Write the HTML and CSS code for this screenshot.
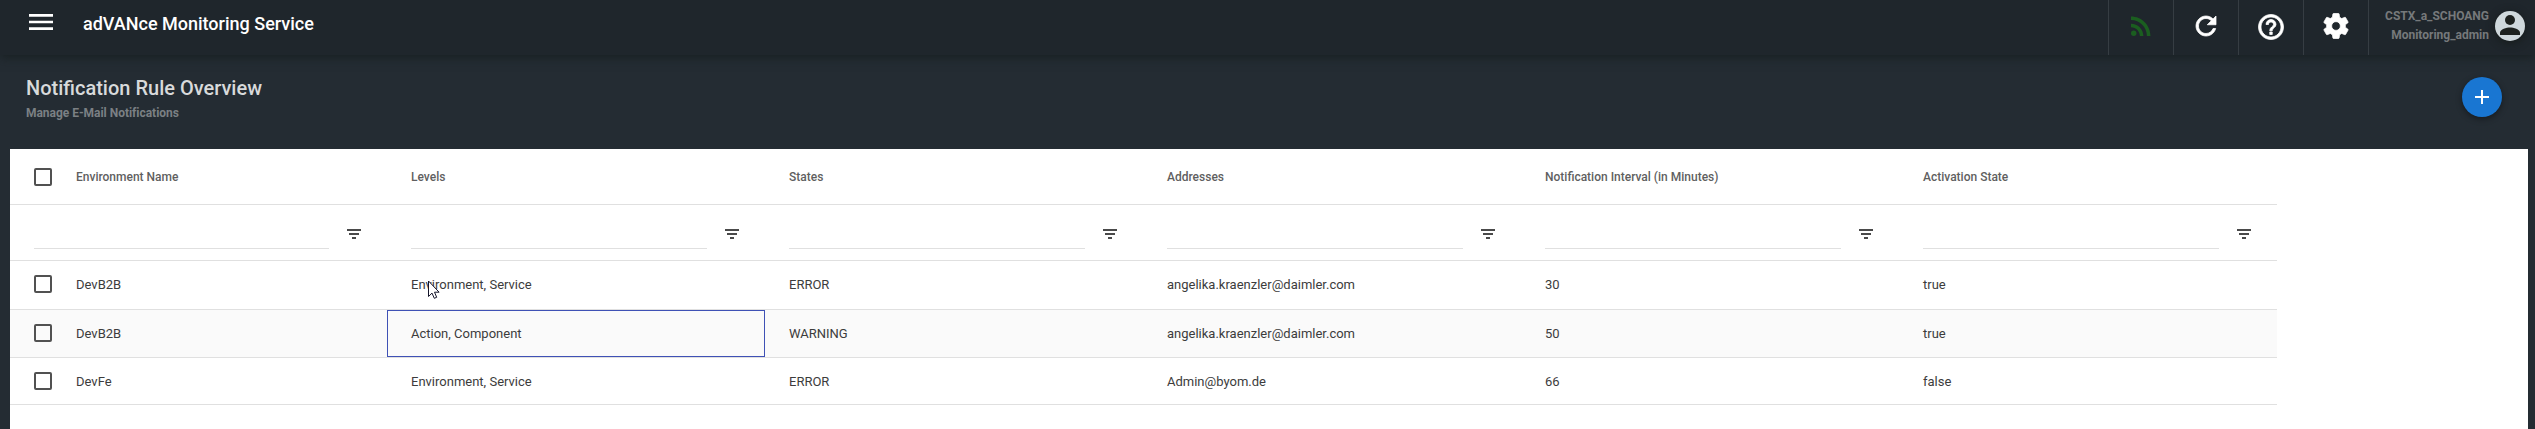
FILE: index.html
```html
<!DOCTYPE html>
<html lang="en">
<head>
<meta charset="utf-8">
<title>adVANce Monitoring Service</title>
<link rel="stylesheet" href="styles.css">
</head>
<body>
<header class="topbar">
  <svg class="menu" viewBox="0 0 24 24"><path d="M3 18h18v-2H3v2zm0-5h18v-2H3v2zm0-7v2h18V6H3z"/></svg>
  <div class="brand">adVANce Monitoring Service</div>
  <nav class="tools">
    <div class="tool feed"><svg viewBox="0 0 24 24"><circle cx="6.18" cy="17.82" r="2.18"/><path d="M4 4.44v2.83c7.03 0 12.73 5.7 12.73 12.73h2.83c0-8.59-6.97-15.56-15.56-15.56zm0 5.66v2.83c3.9 0 7.07 3.17 7.07 7.07h2.83c0-5.47-4.43-9.9-9.9-9.9z"/></svg></div>
    <div class="tool"><svg viewBox="0 0 24 24"><path d="M17.65 6.35C16.2 4.9 14.21 4 12 4c-4.42 0-7.99 3.58-7.99 8s3.57 8 7.99 8c3.73 0 6.84-2.55 7.73-6h-2.08c-.82 2.33-3.04 4-5.65 4-3.31 0-6-2.69-6-6s2.69-6 6-6c1.66 0 3.14.69 4.22 1.78L13 11h7V4l-2.35 2.35z"/></svg></div>
    <div class="tool help"><svg viewBox="0 0 24 24"><path d="M11 18h2v-2h-2v2zm1-16C6.48 2 2 6.48 2 12s4.48 10 10 10 10-4.48 10-10S17.52 2 12 2zm0 18c-4.41 0-8-3.59-8-8s3.59-8 8-8 8 3.59 8 8-3.59 8-8 8zm0-14c-2.21 0-4 1.79-4 4h2c0-1.1.9-2 2-2s2 .9 2 2c0 2-3 1.75-3 5h2c0-2.25 3-2.5 3-5 0-2.21-1.79-4-4-4z"/></svg></div>
    <div class="tool"><svg viewBox="0 0 24 24"><path d="M19.43 12.98c.04-.32.07-.64.07-.98s-.03-.66-.07-.98l2.11-1.65c.19-.15.24-.42.12-.64l-2-3.46c-.12-.22-.39-.3-.61-.22l-2.49 1c-.52-.4-1.08-.73-1.69-.98l-.38-2.65C14.46 2.18 14.25 2 14 2h-4c-.25 0-.46.18-.49.42l-.38 2.65c-.61.25-1.17.59-1.69.98l-2.49-1c-.23-.09-.49 0-.61.22l-2 3.46c-.13.22-.07.49.12.64l2.11 1.65c-.04.32-.07.65-.07.98s.03.66.07.98l-2.11 1.65c-.19.15-.24.42-.12.64l2 3.46c.12.22.39.3.61.22l2.49-1c.52.4 1.08.73 1.69.98l.38 2.65c.03.24.24.42.49.42h4c.25 0 .46-.18.49-.42l.38-2.65c.61-.25 1.17-.59 1.69-.98l2.49 1c.23.09.49 0 .61-.22l2-3.46c.12-.22.07-.49-.12-.64l-2.11-1.65zM12 15.5c-1.93 0-3.5-1.57-3.5-3.5s1.57-3.5 3.5-3.5 3.5 1.57 3.5 3.5-1.57 3.5-3.5 3.5z"/></svg></div>
    <div class="user">
      <div class="names"><div class="login">CSTX_a_SCHOANG</div><div class="role">Monitoring_admin</div></div>
      <div class="avatar"><svg viewBox="0 0 30 30"><circle cx="15" cy="9" r="5"/><path d="M5 24v-2.500c0-3.300 6.600-5.100 10-5.100s10 1.800 10 5.100V24z"/></svg></div>
    </div>
  </nav>
</header>
<section class="pagehead">
  <div>
    <h1>Notification Rule Overview</h1>
    <p>Manage E-Mail Notifications</p>
  </div>
  <button class="fab" aria-label="Add"><svg viewBox="0 0 16 16"><path d="M7 1h2v6h6v2H9v6H7V9H1V7h6z"/></svg></button>
</section>
<main class="card">
  <div class="grid">
    <div class="row head">
      <div class="cell"><span class="check"></span><span>Environment Name</span></div>
      <div class="cell">Levels</div>
      <div class="cell">States</div>
      <div class="cell">Addresses</div>
      <div class="cell">Notification Interval (in Minutes)</div>
      <div class="cell">Activation State</div>
    </div>
    <div class="row filters">
      <div class="cell"><span class="field"></span><svg viewBox="0 0 14 10"><path d="M0 0h14v2H0zM2 4h10v2H2zM5 8h4v2H5z"/></svg></div>
      <div class="cell"><span class="field"></span><svg viewBox="0 0 14 10"><path d="M0 0h14v2H0zM2 4h10v2H2zM5 8h4v2H5z"/></svg></div>
      <div class="cell"><span class="field"></span><svg viewBox="0 0 14 10"><path d="M0 0h14v2H0zM2 4h10v2H2zM5 8h4v2H5z"/></svg></div>
      <div class="cell"><span class="field"></span><svg viewBox="0 0 14 10"><path d="M0 0h14v2H0zM2 4h10v2H2zM5 8h4v2H5z"/></svg></div>
      <div class="cell"><span class="field"></span><svg viewBox="0 0 14 10"><path d="M0 0h14v2H0zM2 4h10v2H2zM5 8h4v2H5z"/></svg></div>
      <div class="cell"><span class="field"></span><svg viewBox="0 0 14 10"><path d="M0 0h14v2H0zM2 4h10v2H2zM5 8h4v2H5z"/></svg></div>
    </div>
    <div class="row first">
      <div class="cell"><span class="check"></span><span>DevB2B</span></div>
      <div class="cell">Environment, Service</div>
      <div class="cell">ERROR</div>
      <div class="cell">angelika.kraenzler@daimler.com</div>
      <div class="cell">30</div>
      <div class="cell">true</div>
    </div>
    <div class="row second">
      <div class="cell"><span class="check"></span><span>DevB2B</span></div>
      <div class="cell focused">Action, Component</div>
      <div class="cell">WARNING</div>
      <div class="cell">angelika.kraenzler@daimler.com</div>
      <div class="cell">50</div>
      <div class="cell">true</div>
    </div>
    <div class="row third">
      <div class="cell"><span class="check"></span><span>DevFe</span></div>
      <div class="cell">Environment, Service</div>
      <div class="cell">ERROR</div>
      <div class="cell">Admin@byom.de</div>
      <div class="cell">66</div>
      <div class="cell">false</div>
    </div>
  </div>
</main>
<svg class="pointer" viewBox="0 0 12 19"><path d="M.5 1v15.500l3.500-3.400 2.300 5.200 2.400-1-2.200-5.100h4.600z"/></svg>
</body>
</html>
```
FILE: styles.css
```css
* { box-sizing: border-box; }
body {
  margin: 0;
  height: 429px;
  overflow: hidden;
  display: flex;
  flex-direction: column;
  background: #242c33;
  font-family: Roboto, "Liberation Sans", sans-serif;
  color: #3c3c3c;
}
svg { display: block; flex: none; }

.topbar {
  position: relative;
  flex: none;
  display: flex;
  height: 55px;
  background: #1f262c;
  box-shadow: 0 2px 10px rgba(20, 28, 28, .8);
}
.menu { width: 32px; height: 32px; margin: 6px 0 0 25px; fill: #fff; }
.brand {
  margin: 11px 0 0 26px;
  font-size: 18px;
  line-height: 25px;
  font-weight: 500;
  color: #fff;
}
.tools { display: flex; margin-left: auto; }
.tool {
  width: 65px;
  padding: 11px 0 0 17px;
  border-left: 1px solid #363d43;
}
.tool svg { width: 30px; height: 30px; fill: #fff; stroke: #fff; stroke-width: .6; }
.tool.feed svg { fill: #1b5e20; stroke: none; }
.tool.help { padding-top: 12px; }
.user { display: flex; justify-content: flex-end; width: 167px; padding-right: 10px; border-left: 1px solid #363d43; }
.names {
  margin: 6px 6px 0 0;
  text-align: right;
  font-size: 12px;
  font-weight: 700;
  color: #76797b;
  white-space: nowrap;
}
.login { line-height: 20px; }
.role { line-height: 18px; }
.avatar { width: 30px; height: 30px; margin-top: 11px; border-radius: 50%; background: #cfd8dc; box-shadow: 0 2px 8px rgba(20, 25, 22, .8); }
.avatar svg { width: 30px; height: 30px; fill: #1d211f; }

.pagehead { flex: none; display: flex; justify-content: space-between; height: 94px; padding: 21px 33px 0 26px; }
h1 { margin: 0; font-size: 20px; line-height: 24px; font-weight: 500; color: #d8dadb; }
p { margin: 5px 0 0; font-size: 12px; line-height: 16px; font-weight: 700; letter-spacing: -.03px; color: #7b8084; }
.fab {
  display: grid;
  place-items: center;
  width: 40px;
  height: 40px;
  margin-top: 1px;
  padding: 0;
  border: 0;
  border-radius: 50%;
  background: #1976d2;
  box-shadow: 0 2px 6px rgba(0, 0, 0, .4);
}
.fab svg { width: 16px; height: 16px; fill: #fff; }

.card { flex: 1; margin: 0 7px 0 10px; background: #fff; }
.grid { width: 2267px; font-size: 13px; line-height: 19px; }
.row { display: grid; grid-template-columns: 377px repeat(5, 378px); border-bottom: 1px solid #e0e0e0; }
.cell { display: flex; align-items: flex-start; padding: 14px 24px 0; white-space: nowrap; }
.head { height: 56px; font-size: 12px; line-height: 18px; font-weight: 500; color: #5f5f5f; }
.head .cell { padding-top: 19px; }
.filters { height: 56px; }
.first { height: 49px; }
.second { height: 48px; background: #fafafa; }
.third { height: 47px; }
.check { width: 18px; height: 18px; margin-right: 24px; border: 2px solid #515151; border-radius: 2px; }
.field { flex: 1; height: 44px; border-bottom: 1px solid #e0e0e0; }
.filters .cell { padding: 0 26px 0 24px; }
.filters svg { width: 14px; height: 10px; margin: 24px 0 0 18px; fill: #4a4a4a; }
.second .focused { padding: 13px 23px 0; border: 1px solid #3f51b5; }

.pointer { position: absolute; left: 428px; top: 280px; width: 12px; height: 19px; fill: #fff; stroke: #15152a; stroke-width: 1; }
```
